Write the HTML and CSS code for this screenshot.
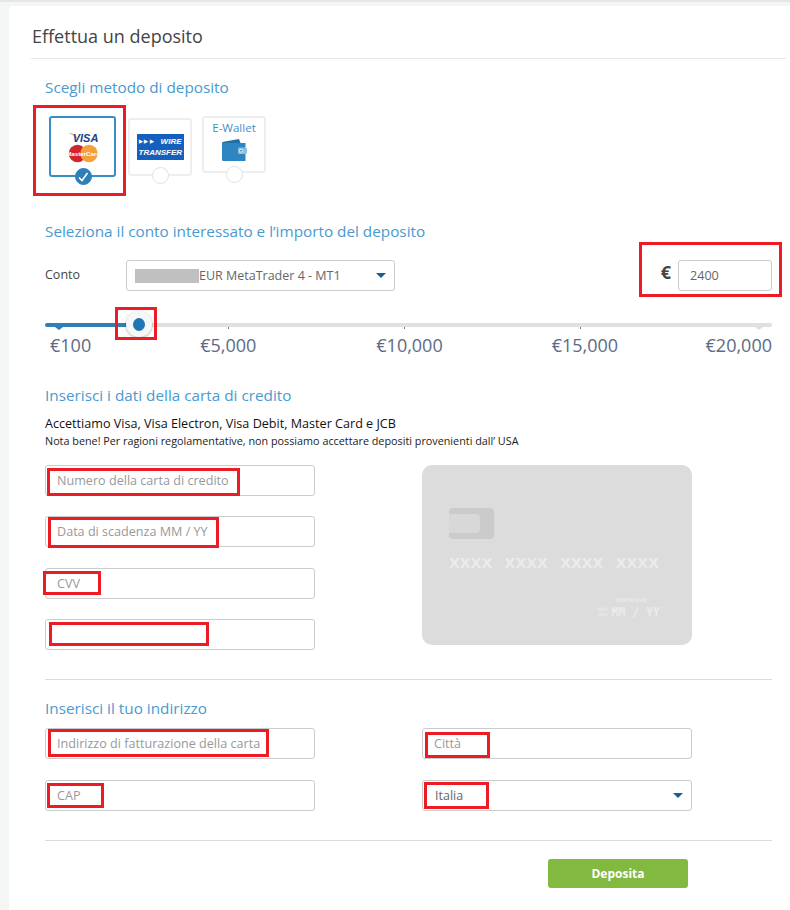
FILE: index.html
```html
<!DOCTYPE html>
<html lang="it">
<head>
    <meta charset="UTF-8">
    <meta name="viewport" content="width=device-width, initial-scale=1.0">
    <title>Effettua un deposito</title>
    <link rel="stylesheet" href="styles.css">
</head>
<body>
    <div class="panel">
        <h1>Effettua un deposito</h1>

        <div class="content">
            <h2 class="first">Scegli metodo di deposito</h2>
            <div class="methods">
                <div class="method method-card">
                    <svg width="36" height="36" viewBox="0 0 36 36">
                        <path d="M3.5 4 Q10 3.5 13.5 11 Q9 6 3.5 4Z" fill="#f0a63a"/>
                        <text x="20.5" y="13" class="visa-text" text-anchor="middle">VISA</text>
                        <circle cx="12.5" cy="24.5" r="8.7" fill="#d2232f"/>
                        <circle cx="24" cy="24.5" r="8.7" fill="#f5a13a"/>
                        <text x="18.2" y="26.7" class="mc-text" text-anchor="middle">MasterCard</text>
                    </svg>
                    <span class="radio radio-on">
                        <svg width="12" height="12" viewBox="0 0 12 12"><path d="M2 6.5 L5 9.5 L10.5 2" fill="none" stroke="#fff" stroke-width="1.6"/></svg>
                    </span>
                    <div class="mark mark-method"></div>
                </div>
                <div class="method method-wire">
                    <div class="wire-logo">
                        <div class="wire-line"><span class="wire-arrows">&#9654;&#9654;&#9654;</span><span>WIRE</span></div>
                        <div class="wire-line"><span>TRANSFER</span></div>
                    </div>
                    <span class="radio"></span>
                </div>
                <div class="method method-wallet">
                    <div class="wallet-label">E-Wallet</div>
                    <svg width="25" height="22" viewBox="0 0 25 22">
                        <path d="M0 4 Q0 3 1.5 2.7 L17 0 L18.5 4 Z" fill="#1f6fa8"/>
                        <path d="M0 4 H23.5 V22 H1.5 Q0 22 0 20.5 Z" fill="#2e86c1"/>
                        <rect x="16" y="8.5" width="9" height="6.5" rx="1.5" fill="#8fc0e0"/>
                        <circle cx="19" cy="11.7" r="1.4" fill="#2e86c1" stroke="#fff" stroke-width="0.8"/>
                    </svg>
                    <span class="radio"></span>
                </div>
            </div>

            <h2 class="second">Seleziona il conto interessato e l’importo del deposito</h2>
            <div class="account-row">
                <span class="account-label">Conto</span>
                <div class="select account-select">
                    <span class="redacted"></span>
                    <span>EUR MetaTrader 4 - MT1</span>
                    <span class="caret"></span>
                </div>
                <div class="amount">
                    <span class="currency">€</span>
                    <input class="input amount-input" type="text" value="2400">
                    <div class="mark mark-amount"></div>
                </div>
            </div>

            <div class="slider">
                <div class="track">
                    <div class="fill"></div>
                    <span class="pin pin-start"></span>
                    <span class="tick tick-1"></span>
                    <span class="tick tick-2"></span>
                    <span class="tick tick-3"></span>
                    <span class="pin pin-end"></span>
                    <div class="thumb"><span></span></div>
                    <div class="mark mark-thumb"></div>
                </div>
                <div class="scale">
                    <span class="scale-100">€100</span>
                    <span class="scale-5k">€5,000</span>
                    <span class="scale-10k">€10,000</span>
                    <span class="scale-15k">€15,000</span>
                    <span class="scale-20k">€20,000</span>
                </div>
            </div>

            <h2 class="third">Inserisci i dati della carta di credito</h2>
            <p class="accept">Accettiamo Visa, Visa Electron, Visa Debit, Master Card e JCB</p>
            <p class="note">Nota bene! Per ragioni regolamentative, non possiamo accettare depositi provenienti dall’ USA</p>

            <div class="card-row">
                <div class="card-fields">
                    <div class="field">
                        <input class="input" type="text" placeholder="Numero della carta di credito">
                        <div class="mark mark-number"></div>
                    </div>
                    <div class="field">
                        <input class="input" type="text" placeholder="Data di scadenza MM / YY">
                        <div class="mark mark-date"></div>
                    </div>
                    <div class="field field-cvv">
                        <input class="input" type="text" placeholder="CVV">
                        <div class="mark mark-cvv"></div>
                    </div>
                    <div class="field">
                        <input class="input" type="text">
                        <div class="mark mark-name"></div>
                    </div>
                </div>
                <div class="credit-card">
                    <div class="chip"><span></span></div>
                    <div class="card-number">
                        <span>XXXX</span><span>XXXX</span><span>XXXX</span><span>XXXX</span>
                    </div>
                    <div class="card-expiry">
                        <div class="expiry-hint">MONTH/YEAR</div>
                        <div class="expiry-row">
                            <span class="valid">valid<br>thru</span>
                            <span class="expiry-date">MM / YY</span>
                        </div>
                    </div>
                </div>
            </div>

            <hr class="rule rule-address">

            <h2 class="fourth">Inserisci il tuo indirizzo</h2>
            <div class="address-grid">
                <div class="field">
                    <input class="input" type="text" placeholder="Indirizzo di fatturazione della carta">
                    <div class="mark mark-street"></div>
                </div>
                <div class="field">
                    <input class="input" type="text" placeholder="Città">
                    <div class="mark mark-city"></div>
                </div>
                <div class="field">
                    <input class="input" type="text" placeholder="CAP">
                    <div class="mark mark-zip"></div>
                </div>
                <div class="field">
                    <div class="select country-select">
                        <span>Italia</span>
                        <span class="caret"></span>
                    </div>
                    <div class="mark mark-country"></div>
                </div>
            </div>

            <hr class="rule rule-submit">

            <div class="actions">
                <button class="submit">Deposita</button>
            </div>
        </div>
    </div>
</body>
</html>
```

FILE: styles.css
```css
* {
    box-sizing: border-box;
}
html, body {
    height: 100%;
}
body {
    margin: 0;
    font-family: "Open Sans", sans-serif;
    color: #333;
    background-color: #f4f6f5;
    border-top: 2px solid #e6e6e6;
    overflow: hidden;
}
.panel {
    margin: 4px 0 0 9px;
    min-height: 904px;
    background: #fff;
    border-radius: 3px 0 0 0;
    padding-top: 18px;
}
h1 {
    margin: 0 4px 0 22px;
    padding: 0 0 10px 1px;
    height: 35px;
    font-size: 18px;
    line-height: 24px;
    font-weight: 400;
    color: #444;
    border-bottom: 1px solid #e8e8e8;
}
.content {
    padding: 0 18px 0 36px;
}
h2 {
    margin: 0;
    font-size: 15.3px;
    line-height: 20px;
    font-weight: 400;
    color: #4a9ad0;
}
h2.first {
    padding-top: 18px;
}
h2.second {
    margin-top: 44px;
}
h2.third {
    margin-top: 28px;
}
h2.fourth {
    margin-top: 18px;
}

/* deposit methods */
.methods {
    display: flex;
    align-items: flex-start;
    margin: 19px 0 0 4px;
}
.method {
    position: relative;
    display: flex;
    flex-direction: column;
    align-items: center;
    background: #fff;
    border: 2px solid #eee;
    border-radius: 3px;
}
.method-card {
    width: 67px;
    height: 61px;
    padding-top: 11px;
    border: 2px solid #3a8cc4;
    margin-right: 12px;
}
.method-wire {
    width: 64px;
    height: 58px;
    margin-top: 2px;
    margin-right: 10px;
    padding-top: 14px;
}
.method-wallet {
    width: 64px;
    height: 57px;
}
.wire-logo {
    display: flex;
    flex-direction: column;
    align-items: center;
    justify-content: center;
    width: 47px;
    height: 26px;
    background: #1560bd;
    color: #fff;
    font-size: 8px;
    line-height: 11px;
    font-weight: 700;
    font-style: italic;
    font-family: "Liberation Sans", sans-serif;
    white-space: nowrap;
}
.wire-line {
    display: flex;
    justify-content: space-between;
    align-items: center;
    width: 43px;
}
.wire-arrows {
    font-size: 5px;
    font-style: normal;
    letter-spacing: 1.5px;
}
.wallet-label {
    font-size: 11.5px;
    line-height: 14px;
    color: #3f8fc7;
    margin-top: 3px;
    margin-bottom: 4px;
}
.visa-text {
    font-family: "Liberation Sans", sans-serif;
    font-size: 11px;
    font-weight: 700;
    font-style: italic;
    fill: #1a3f87;
}
.mc-text {
    font-family: "Liberation Sans", sans-serif;
    font-size: 6.2px;
    font-weight: 700;
    fill: #fff;
}
.radio {
    position: absolute;
    left: 50%;
    bottom: -10px;
    width: 17px;
    height: 17px;
    margin-left: -8px;
    border: 1px solid #e2e2e2;
    border-radius: 50%;
    background: #fff;
}
.method-wallet .radio {
    bottom: -12px;
}
.radio-on {
    display: flex;
    align-items: center;
    justify-content: center;
    background: #2e7fb8;
    border-color: #2e7fb8;
    bottom: -10px;
}

/* account row */
.account-row {
    display: flex;
    align-items: center;
    margin-top: 19px;
}
.account-label {
    width: 81px;
    font-size: 12.5px;
    color: #444;
    margin-top: -2px;
}
.select {
    position: relative;
    display: flex;
    align-items: center;
    height: 31px;
    background: #fff;
    border: 1px solid #ccc;
    border-radius: 3px;
    font-size: 12.5px;
    color: #666;
}
.account-select {
    width: 269px;
    padding-left: 8px;
}
.redacted {
    width: 64px;
    height: 14px;
    background: #c0c0c0;
}
.caret {
    position: absolute;
    right: 8px;
    top: 12px;
    border-left: 5px solid transparent;
    border-right: 5px solid transparent;
    border-top: 5px solid #125f9d;
}
.amount {
    position: relative;
    display: flex;
    align-items: center;
    margin-left: auto;
}
.currency {
    font-size: 18px;
    font-weight: 700;
    color: #444;
    margin-right: 7px;
    margin-top: -7px;
}
.input {
    display: block;
    width: 100%;
    height: 31px;
    padding: 0 11px;
    background: #fff;
    border: 1px solid #ccc;
    border-radius: 3px;
    font-family: "Open Sans", sans-serif;
    font-size: 12.6px;
    color: #666;
    outline: none;
}
.input::placeholder {
    color: #999;
    opacity: 1;
}
.amount-input {
    width: 94px;
}

/* slider */
.slider {
    margin-top: 32px;
}
.track {
    position: relative;
    height: 4px;
    background: #e0e0e0;
    border-radius: 2px;
}
.fill {
    width: 85px;
    height: 4px;
    background: #2e7fb8;
    border-radius: 2px;
}
.pin {
    position: absolute;
    top: 4px;
    border-left: 4px solid transparent;
    border-right: 4px solid transparent;
}
.pin-start {
    left: 10px;
    border-top: 3px solid #2e7fb8;
}
.pin-end {
    right: 9px;
    border-top: 3px solid #e0e0e0;
}
.tick {
    position: absolute;
    top: 4px;
    width: 1px;
    height: 2px;
    background: #777;
}
.tick-1 {
    left: 183px;
}
.tick-2 {
    left: 359px;
}
.tick-3 {
    left: 535px;
}
.thumb {
    position: absolute;
    left: 81px;
    top: -12px;
    display: flex;
    align-items: center;
    justify-content: center;
    width: 26px;
    height: 26px;
    background: #f7f7f7;
    border-radius: 50%;
    box-shadow: 0 1px 3px rgba(0,0,0,0.3);
}
.thumb span {
    width: 12px;
    height: 13px;
    border-radius: 50%;
    background: #1f76b5;
}
.scale {
    display: flex;
    margin-top: 6px;
    font-size: 18px;
    line-height: 24px;
    color: #5c6b85;
}
.scale-100 {
    margin-left: 5px;
}
.scale-5k {
    margin-left: 109px;
}
.scale-10k {
    margin-left: 120px;
}
.scale-15k {
    margin-left: 109px;
}
.scale-20k {
    margin-left: auto;
}

/* card details */
.accept {
    margin: 10px 0 0;
    font-size: 12.6px;
    line-height: 18px;
    color: #111;
}
.note {
    margin: 0;
    font-size: 10.8px;
    line-height: 16px;
    color: #222;
}
.card-row {
    display: flex;
    justify-content: space-between;
    margin-top: 16px;
    padding-right: 80px;
}
.card-fields {
    display: flex;
    flex-direction: column;
    gap: 20px;
    width: 270px;
}
.field {
    position: relative;
}
.field-cvv {
    margin-top: 1px;
}
.credit-card {
    position: relative;
    width: 270px;
    height: 180px;
    background: #dcdcdc;
    border-radius: 10px;
    padding: 43px 27px 0;
    font-family: "DejaVu Sans", sans-serif;
    font-weight: 700;
    color: #ebebeb;
}
.chip {
    width: 45px;
    height: 31px;
    padding-top: 6px;
    background: #cbcbcb;
    border-radius: 4px;
}
.chip span {
    display: block;
    width: 31px;
    height: 19px;
    background: #d8d8d8;
    border-radius: 0 4px 4px 0;
}
.card-number {
    display: flex;
    justify-content: space-between;
    width: 210px;
    margin-top: 14px;
    font-size: 14px;
    line-height: 20px;
}
.card-expiry {
    position: absolute;
    right: 32px;
    top: 132px;
}
.expiry-hint {
    margin-left: 19px;
    font-size: 4.5px;
    line-height: 8px;
    font-family: "Liberation Sans", sans-serif;
}
.expiry-row {
    display: flex;
    align-items: center;
    gap: 4px;
}
.valid {
    font-size: 4.5px;
    line-height: 5px;
    text-align: right;
    font-family: "Liberation Sans", sans-serif;
}
.expiry-date {
    font-family: "DejaVu Sans Mono", monospace;
    font-size: 11.5px;
    line-height: 14px;
}
.rule {
    margin: 0;
    border: 0;
    border-top: 1px solid #ddd;
}
.rule-address {
    margin-top: 29px;
}

/* address */
.address-grid {
    display: grid;
    grid-template-columns: 270px 270px;
    column-gap: 107px;
    row-gap: 21px;
    margin-top: 10px;
}
.country-select {
    padding-left: 12px;
}
.rule-submit {
    margin-top: 29px;
}
.actions {
    padding: 18px 0 0 503px;
}
.submit {
    display: block;
    width: 140px;
    height: 29px;
    background-color: #82b941;
    color: #fff;
    border: none;
    border-radius: 3px;
    font-family: "Open Sans", sans-serif;
    font-size: 12px;
    font-weight: 700;
    cursor: pointer;
}

/* red annotation boxes drawn over the form */
.mark {
    position: absolute;
    border: 3px solid #ed1c24;
    pointer-events: none;
}
.mark-method {
    left: -18px;
    top: -13px;
    width: 93px;
    height: 91px;
}
.mark-amount {
    left: -22px;
    top: -18px;
    width: 143px;
    height: 55px;
}
.mark-thumb {
    left: 70px;
    top: -16px;
    width: 42px;
    height: 33px;
}
.mark-number {
    left: 2px;
    top: 3px;
    width: 193px;
    height: 28px;
}
.mark-date {
    left: 3px;
    top: 1px;
    width: 171px;
    height: 31px;
}
.mark-cvv {
    left: -2px;
    top: 3px;
    width: 58px;
    height: 24px;
}
.mark-name {
    left: 4px;
    top: 3px;
    width: 160px;
    height: 24px;
}
.mark-street {
    left: 3px;
    top: 1px;
    width: 221px;
    height: 28px;
}
.mark-city {
    left: 3px;
    top: 4px;
    width: 65px;
    height: 26px;
}
.mark-zip {
    left: 2px;
    top: 3px;
    width: 57px;
    height: 25px;
}
.mark-country {
    left: 2px;
    top: 2px;
    width: 65px;
    height: 27px;
}
```
